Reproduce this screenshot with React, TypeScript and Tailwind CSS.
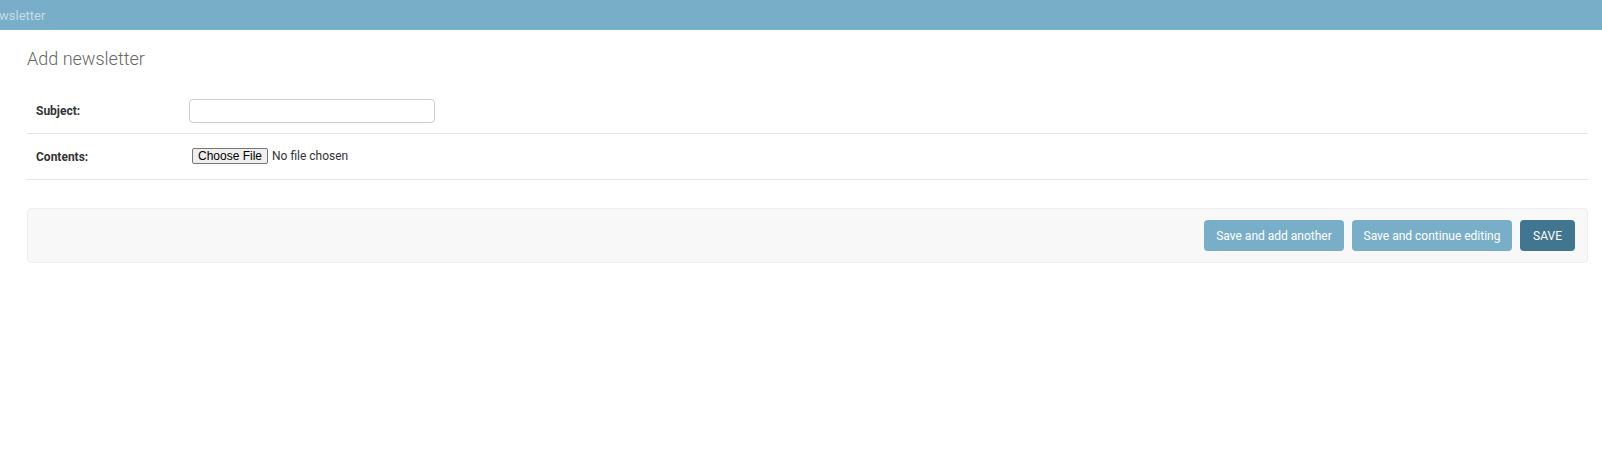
import React from "react";

const labelCls = "w-[162px] shrink-0 pl-[9px] text-[12px] font-bold text-[#333]";

const FormRow = ({ label, children }: { label: string; children: React.ReactNode }) => (
  <div className="flex items-center border-b border-[#e5e5e5] h-[46px]">
    <label className={labelCls}>{label}</label>
    <div className="flex items-center">{children}</div>
  </div>
);

export default function App() {
  return (
    <div className="min-h-[474px] bg-white font-['Roboto',sans-serif] text-[#333]">
      <div className="h-[30px] bg-[#79aec8] overflow-hidden flex items-center">
        <span className="ml-[-15px] text-[13px] text-[#c4dce8] leading-none">newsletter</span>
      </div>

      <div className="pl-[27px] pr-[14px]">
        <h1 className="mt-[18px] mb-[18px] text-[18px] font-light text-[#666] leading-[22px]">Add newsletter</h1>

        <div>
          <FormRow label="Subject:">
            <input
              type="text"
              className="w-[246px] h-[24px] rounded-[4px] border border-[#ccc] bg-white px-[6px] text-[13px] outline-none"
            />
          </FormRow>
          <FormRow label="Contents:">
            <div className="flex items-center -mt-[2px] ml-[3px]">
              <span className="h-[16px] px-[5px] border border-[#767676] rounded-[2px] bg-[#efefef] font-['Liberation_Sans',Arial,sans-serif] text-[12px] leading-[14px] text-black">
                Choose File
              </span>
              <span className="ml-[4px] text-[12px] text-[#333]">No file chosen</span>
            </div>
          </FormRow>
        </div>

        <div className="mt-[28px] flex justify-end gap-[8px] rounded-[4px] border border-[#eee] bg-[#f8f8f8] px-[12px] py-[11px]">
          <button className="h-[31px] w-[140px] rounded-[4px] bg-[#79aec8] text-[12px] text-white">
            Save and add another
          </button>
          <button className="h-[31px] w-[160px] rounded-[4px] bg-[#79aec8] text-[12px] text-white">
            Save and continue editing
          </button>
          <button className="h-[31px] w-[55px] rounded-[4px] bg-[#417690] text-[12px] text-white">
            SAVE
          </button>
        </div>
      </div>
    </div>
  );
}
